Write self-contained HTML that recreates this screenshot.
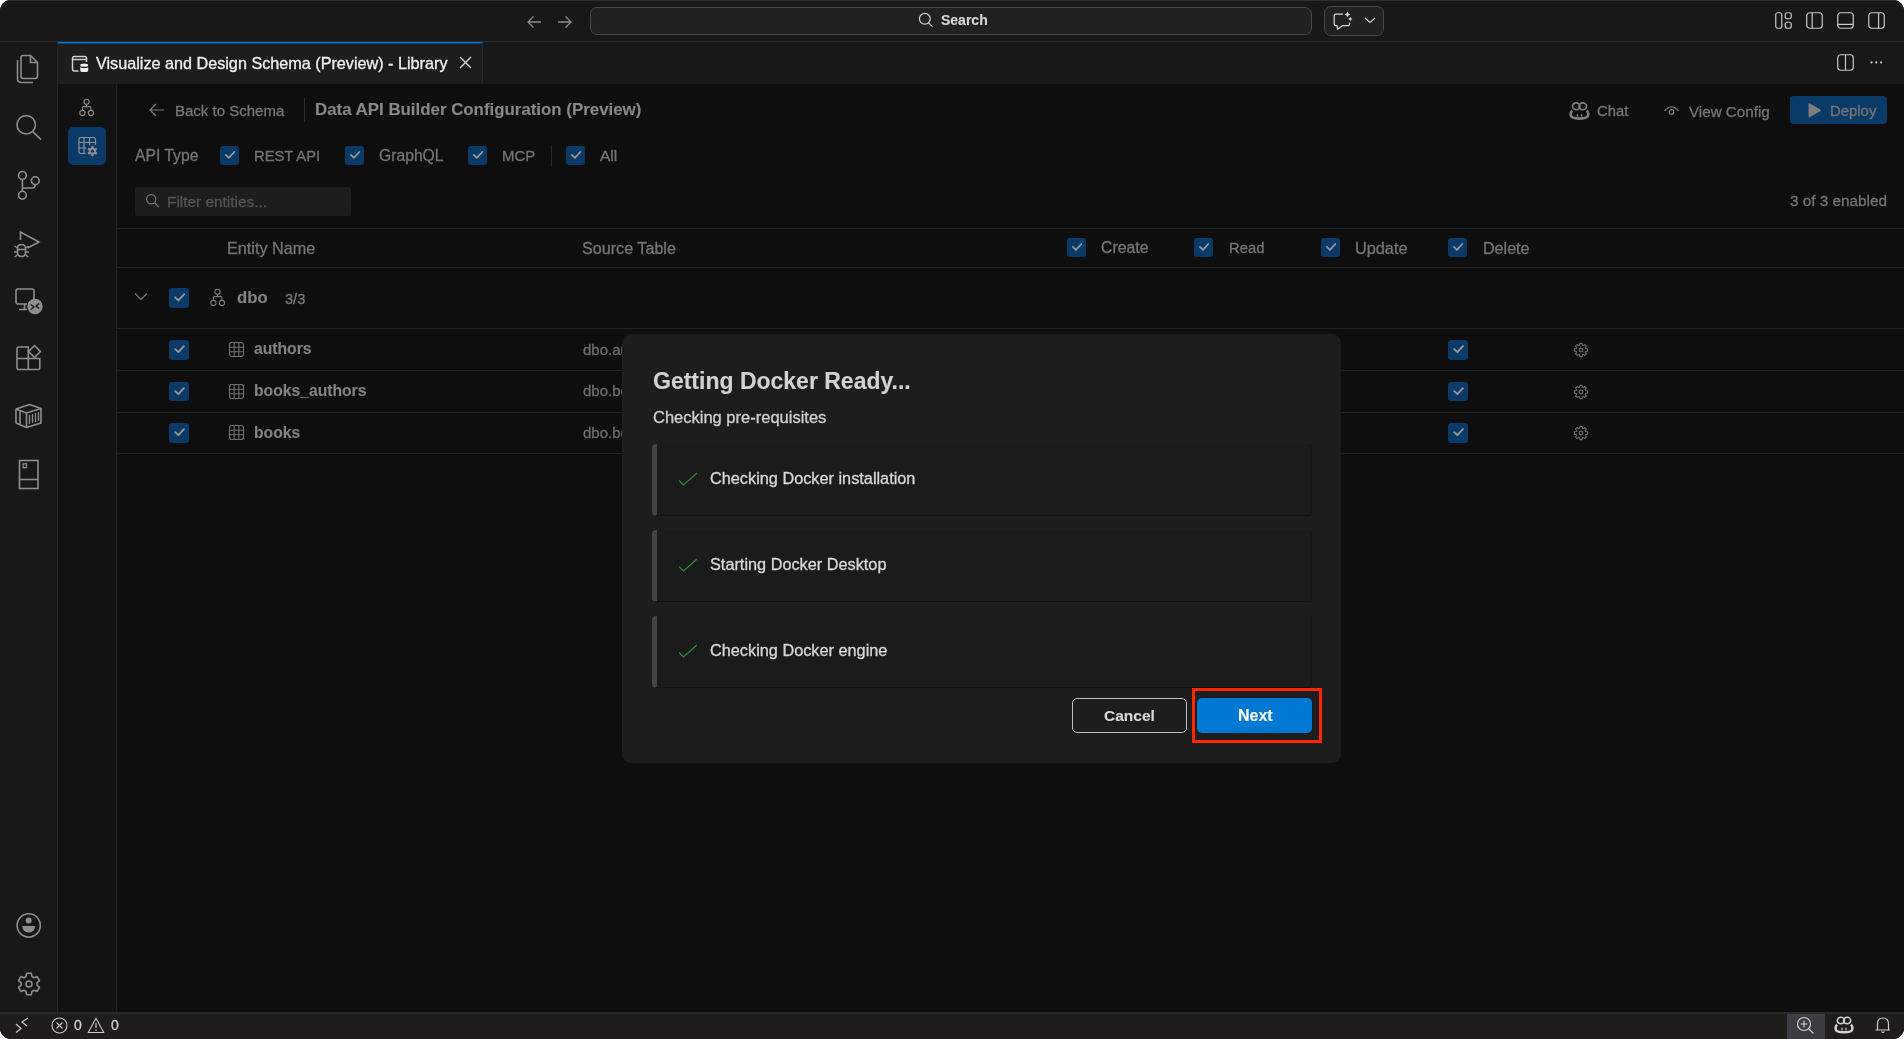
<!DOCTYPE html>
<html><head><meta charset="utf-8">
<style>
*{box-sizing:border-box;margin:0;padding:0}
html,body{width:1904px;height:1039px;overflow:hidden;background:#ffffff;font-family:"Liberation Sans",sans-serif}
.win{position:absolute;left:0;top:0;width:1904px;height:1039px;border-radius:11px;overflow:hidden;background:#181818}
.abs{position:absolute}
.titlebar{position:absolute;left:0;top:0;width:1904px;height:42px;background:#181818;border-top:1px solid #2e2e2e;border-bottom:1px solid #2b2b2b}
.activity{position:absolute;left:0;top:42px;width:58px;height:970px;background:#181818;border-right:1px solid #262626}
.tabbar{position:absolute;left:58px;top:42px;width:1846px;height:42px;background:#181818}
.tab{position:absolute;left:0;top:0;width:425px;height:42px;background:#1d1d1d;border-top:1px solid #0078d4;box-shadow:inset 0 1px 0 rgba(0,120,212,0.45);border-right:1px solid #262626}
.side2{position:absolute;left:58px;top:84px;width:59px;height:928px;background:#121212;border-right:1px solid #222}
.main{position:absolute;left:117px;top:84px;width:1787px;height:928px;background:#0e0e0e}
.status{position:absolute;left:0;top:1012px;width:1904px;height:27px;background:#1e1d1c;border-top:2px solid #2a2a2a}
.t{position:absolute;white-space:nowrap;line-height:1;will-change:transform;-webkit-text-stroke:0.3px currentColor}
.t.b{-webkit-text-stroke:0.12px currentColor}
svg{position:absolute;overflow:visible}
.step{position:absolute;left:652px;width:660px;height:72px;border-radius:4px;background:#1c1b1b;border-left:5px solid #444;border-bottom:1px solid #131313;border-right:1px solid #161616}
.cb{position:absolute;width:19px;height:19px;border-radius:3px;background:#0a3a68}

</style></head><body>
<div class="win">
  <div class="titlebar">
    <svg style="left:525px;top:12px" width="18" height="18" viewBox="0 0 18 18"><path d="M16 9H3M8.5 3.5L3 9l5.5 5.5" fill="none" stroke="#8a8a8a" stroke-width="1.3"/></svg>
    <svg style="left:556px;top:12px" width="18" height="18" viewBox="0 0 18 18"><path d="M2 9h13M9.5 3.5L15 9l-5.5 5.5" fill="none" stroke="#8a8a8a" stroke-width="1.3"/></svg>
    <div class="abs" style="left:590px;top:6px;width:722px;height:28px;border:1px solid #474747;border-radius:7px;background:#212121"></div>
    <svg style="left:918px;top:11px" width="16" height="16" viewBox="0 0 16 16"><circle cx="6.8" cy="6.8" r="5.4" fill="none" stroke="#cfcfcf" stroke-width="1.2"/><path d="M10.6 10.8L14.6 14.8" stroke="#cfcfcf" stroke-width="1.2"/></svg>
    <div class="t b" style="left:941px;top:12.3px;font-size:14px;font-weight:700;color:#d8d8d8">Search</div>
    <div class="abs" style="left:1324px;top:5px;width:60px;height:30px;border:1px solid #474747;border-radius:7px;background:#212121"></div>
    <svg style="left:1333px;top:10px" width="20" height="20" viewBox="0 0 20 20"><path d="M9.9 3.0H3.0Q1.2 3.0 1.2 5.0V12.6Q1.2 14.7 3.0 14.7H4.0L4.6 18.2L9.3 14.7H14.6Q16.6 14.7 16.6 12.5V11.6" fill="none" stroke="#d4d4d4" stroke-width="1.25" stroke-linejoin="round"/><path d="M14.4 0.6Q14.9 3 17.3 3.5Q14.9 4 14.4 6.4Q13.9 4 11.5 3.5Q13.9 3 14.4 0.6Z" fill="#d8d8d8"/><path d="M17.3 5.8Q17.7 7.6 19.5 8Q17.7 8.4 17.3 10.2Q16.9 8.4 15.1 8Q16.9 7.6 17.3 5.8Z" fill="#d8d8d8"/></svg>
    <svg style="left:1364px;top:14.5px" width="12" height="8" viewBox="0 0 12 8"><path d="M1 2l5 4.5L11 2" fill="none" stroke="#cfcfcf" stroke-width="1.2"/></svg>
    <svg style="left:1775px;top:11px" width="18" height="19" viewBox="0 0 18 19"><rect x="0.75" y="0.75" width="6" height="15.5" rx="2" fill="none" stroke="#c8c8c8" stroke-width="1.2"/><rect x="10.25" y="0.75" width="6" height="6" rx="2" fill="none" stroke="#c8c8c8" stroke-width="1.2"/><rect x="10.25" y="10.25" width="6" height="6" rx="2" fill="none" stroke="#c8c8c8" stroke-width="1.2"/></svg>
    <svg style="left:1806px;top:11px" width="18" height="19" viewBox="0 0 18 19"><rect x="0.75" y="0.75" width="15.5" height="15.5" rx="3" fill="none" stroke="#c8c8c8" stroke-width="1.2"/><path d="M6.2 1v15.5" stroke="#c8c8c8" stroke-width="1.2"/></svg>
    <svg style="left:1837px;top:11px" width="18" height="19" viewBox="0 0 18 19"><rect x="0.75" y="0.75" width="15.5" height="15.5" rx="3" fill="none" stroke="#c8c8c8" stroke-width="1.2"/><path d="M1 12.3h15" stroke="#c8c8c8" stroke-width="1.2"/></svg>
    <svg style="left:1868px;top:11px" width="18" height="19" viewBox="0 0 18 19"><rect x="0.75" y="0.75" width="15.5" height="15.5" rx="3" fill="none" stroke="#c8c8c8" stroke-width="1.2"/><path d="M10.6 1v15.5" stroke="#c8c8c8" stroke-width="1.2"/></svg>
  </div>
  <div class="activity"></div>
  <!-- activity icons (absolute to window) -->
  <svg style="left:15px;top:54px" width="26" height="31" viewBox="0 0 26 31"><path d="M6 3.5Q6 1.5 8 1.5H15.5L22.5 8.5V22Q22.5 24.5 20 24.5H8.5Q6 24.5 6 22Z" fill="none" stroke="#8e8e8e" stroke-width="1.6"/><path d="M15.5 1.5V8.5H22.5" fill="none" stroke="#8e8e8e" stroke-width="1.6"/><path d="M2.5 6V24.5Q2.5 28.5 6.5 28.5H18" fill="none" stroke="#8e8e8e" stroke-width="1.6"/></svg>
  <svg style="left:15px;top:114px" width="28" height="28" viewBox="0 0 28 28"><circle cx="11.2" cy="10.8" r="9.2" fill="none" stroke="#8e8e8e" stroke-width="1.6"/><path d="M17.8 17.6L26 25.6" stroke="#8e8e8e" stroke-width="1.6"/></svg>
  <svg style="left:15px;top:168px" width="28" height="34" viewBox="0 0 28 34"><circle cx="7.4" cy="7.4" r="3.9" fill="none" stroke="#8e8e8e" stroke-width="1.6"/><circle cx="20.3" cy="12.7" r="3.9" fill="none" stroke="#8e8e8e" stroke-width="1.6"/><circle cx="7.4" cy="27.2" r="3.9" fill="none" stroke="#8e8e8e" stroke-width="1.6"/><path d="M7.4 11.3V23.3M20.3 16.6Q20.3 20 17 20H7.4" fill="none" stroke="#8e8e8e" stroke-width="1.6"/></svg>
  <svg style="left:12px;top:229px" width="32" height="30" viewBox="0 0 32 30"><path d="M8.5 11V3L27 13L15.5 19" fill="none" stroke="#8e8e8e" stroke-width="1.6"/><path d="M5.5 19.5Q5.5 15.5 9.5 15.5Q13.5 15.5 13.5 19.5V23.5Q13.5 27.5 9.5 27.5Q5.5 27.5 5.5 23.5Z" fill="none" stroke="#8e8e8e" stroke-width="1.6"/><path d="M2.5 17L5.5 19M16.5 17L13.5 19M2 23H5.5M17 23H13.5M2.5 28L5.5 26M16.5 28L13.5 26M5.5 20.5H13.5" fill="none" stroke="#8e8e8e" stroke-width="1.4"/></svg>
  <svg style="left:14px;top:286px" width="30" height="30" viewBox="0 0 30 30"><path d="M20 16V5Q20 3 18 3H4Q2 3 2 5V16Q2 18 4 18H13" fill="none" stroke="#8e8e8e" stroke-width="1.6"/><path d="M10.5 18V23M5 23.5H13" fill="none" stroke="#8e8e8e" stroke-width="1.6"/><circle cx="21" cy="20.5" r="7.7" fill="#8e8e8e"/><path d="M16.8 18.5L20 21L16.8 23.5M25.2 17.5L22 20L25.2 22.5" fill="none" stroke="#1a1a1a" stroke-width="1.3"/></svg>
  <svg style="left:15px;top:344px" width="30" height="30" viewBox="0 0 30 30"><path d="M2 14.5H13.3V25.5H3.5Q2 25.5 2 24V14.5ZM2 14.5V4.5Q2 3 3.5 3H13.3V25.5M13.3 14.5H24.8V24Q24.8 25.5 23.3 25.5H13.3" fill="none" stroke="#8e8e8e" stroke-width="1.6"/><path d="M19.5 1.5L25.5 7.5L19.5 13.5L13.5 7.5Z" fill="none" stroke="#8e8e8e" stroke-width="1.6" stroke-linejoin="round"/></svg>
  <svg style="left:14px;top:403px" width="30" height="28" viewBox="0 0 30 28"><path d="M2 6L15.5 1.5L27 5.5V20L12.5 24.5L2 20Z" fill="none" stroke="#8e8e8e" stroke-width="1.6" stroke-linejoin="round"/><path d="M2 6L12.5 10L27 5.5M12.5 10V24.5M6 7.5V21.5" fill="none" stroke="#8e8e8e" stroke-width="1.6"/><path d="M15.5 12V21M18.5 11V20M21.5 10V19M24.5 9V18" fill="none" stroke="#8e8e8e" stroke-width="1.3"/></svg>
  <svg style="left:18px;top:459px" width="22" height="31" viewBox="0 0 22 31"><rect x="1.5" y="1.5" width="18.5" height="28" fill="none" stroke="#8e8e8e" stroke-width="1.6"/><path d="M1.5 20.5H20" stroke="#8e8e8e" stroke-width="1.6"/><rect x="5.2" y="4.8" width="3.3" height="3.8" fill="none" stroke="#8e8e8e" stroke-width="1.3"/></svg>
  <svg style="left:15px;top:912px" width="28" height="28" viewBox="0 0 28 28"><circle cx="13.7" cy="13.4" r="11.6" fill="none" stroke="#8e8e8e" stroke-width="1.6"/><circle cx="13.7" cy="8.6" r="3" fill="#8e8e8e"/><path d="M7.4 14H20Q20 20.4 13.7 20.4Q7.4 20.4 7.4 14Z" fill="#8e8e8e"/></svg>
  <svg style="left:15px;top:970px" width="28" height="28" viewBox="-14 -14 28 28"><path d="M-2.97 -7.43 L-2.40 -10.73 L2.40 -10.73 L2.97 -7.43 L4.95 -6.28 L8.10 -7.45 L10.50 -3.29 L7.92 -1.14 L7.92 1.14 L10.50 3.29 L8.10 7.45 L4.95 6.28 L2.97 7.43 L2.40 10.73 L-2.40 10.73 L-2.97 7.43 L-4.95 6.28 L-8.10 7.45 L-10.50 3.29 L-7.92 1.14 L-7.92 -1.14 L-10.50 -3.29 L-8.10 -7.45 L-4.95 -6.28Z" stroke-linejoin="round" fill="none" stroke="#8e8e8e" stroke-width="1.6"/><circle cx="0" cy="0" r="3" fill="none" stroke="#8e8e8e" stroke-width="1.6"/></svg>
  <div class="tabbar"><div class="tab"></div></div>
  <svg style="left:71px;top:55px" width="19" height="19" viewBox="0 0 19 19"><path d="M7.5 16H3.5Q1.5 16 1.5 14V3.5Q1.5 1.5 3.5 1.5H13.5Q15.5 1.5 15.5 3.5V7" fill="none" stroke="#d0d0d0" stroke-width="1.5"/><path d="M1.5 4.5H15.5" stroke="#d0d0d0" stroke-width="1.5"/><ellipse cx="13.2" cy="10.2" rx="4" ry="1.6" fill="#f0f0f0"/><path d="M9.2 11.5V15.5Q9.2 17 13.2 17Q17.2 17 17.2 15.5V11.5Q17.2 13 13.2 13Q9.2 13 9.2 11.5Z" fill="#f0f0f0"/></svg>
  <div class="t" style="left:96px;top:55.3px;font-size:16.2px;color:#f0f0f0">Visualize and Design Schema (Preview) - Library</div>
  <svg style="left:459px;top:56px" width="13" height="13" viewBox="0 0 13 13"><path d="M1 1L12 12M12 1L1 12" stroke="#d8d8d8" stroke-width="1.4"/></svg>
  <svg style="left:1836px;top:53px" width="19" height="19" viewBox="0 0 19 19"><rect x="1.75" y="1.75" width="15.5" height="15.5" rx="3" fill="none" stroke="#c8c8c8" stroke-width="1.2"/><path d="M9.5 2v15" stroke="#c8c8c8" stroke-width="1.2"/></svg>
  <svg style="left:1869px;top:60px" width="16" height="5" viewBox="0 0 16 5"><circle cx="2.5" cy="2.4" r="1.1" fill="#c8c8c8"/><circle cx="7.3" cy="2.4" r="1.1" fill="#c8c8c8"/><circle cx="12.1" cy="2.4" r="1.1" fill="#c8c8c8"/></svg>
  <div class="side2"></div>
  <svg style="left:78px;top:98px" width="17" height="19" viewBox="0 0 17 19"><circle cx="8.5" cy="3.8" r="2.6" fill="none" stroke="#888" stroke-width="1.1"/><circle cx="4.4" cy="15" r="2.6" fill="none" stroke="#888" stroke-width="1.1"/><circle cx="12.9" cy="15" r="2.6" fill="none" stroke="#888" stroke-width="1.1"/><path d="M8.5 6.4V8.6M4.4 12.4V9.6Q4.4 8.6 5.4 8.6H11.9Q12.9 8.6 12.9 9.6V12.4" fill="none" stroke="#888" stroke-width="1.1"/></svg>
  <div class="abs" style="left:68px;top:127px;width:38px;height:38px;border-radius:5px;background:#0a3a68"></div>
  <svg style="left:77px;top:136px" width="22" height="22" viewBox="0 0 22 22"><path d="M8.5 17.5H4Q2 17.5 2 15.5V3.5Q2 1.5 4 1.5H16.5Q18.5 1.5 18.5 3.5V9M2 6.5H18.5M2 12H9M7 1.5V17.5M12.5 1.5V9" fill="none" stroke="#8f8f8f" stroke-width="1.2"/><g transform="translate(15.4 15.2)"><path d="M-1.27 -3.37 L-1.03 -5.10 L1.03 -5.10 L1.27 -3.37 L2.28 -2.78 L3.90 -3.44 L4.93 -1.65 L3.55 -0.59 L3.55 0.59 L4.93 1.65 L3.90 3.44 L2.28 2.78 L1.27 3.37 L1.03 5.10 L-1.03 5.10 L-1.27 3.37 L-2.28 2.78 L-3.90 3.44 L-4.93 1.65 L-3.55 0.59 L-3.55 -0.59 L-4.93 -1.65 L-3.90 -3.44 L-2.28 -2.78Z" fill="#8f8f8f"/><circle r="1.6" fill="#0a3a68"/></g></svg>
  <div class="main"></div>
  <!-- header -->
  <svg style="left:148px;top:102px" width="18" height="16" viewBox="0 0 18 16"><path d="M16 8H2M8 2L2 8l6 6" fill="none" stroke="#7c7c7c" stroke-width="1.2"/></svg>
  <div class="t" style="left:174.5px;top:103px;font-size:15px;color:#757575">Back to Schema</div>
  <div class="abs" style="left:304px;top:98px;width:1px;height:24px;background:#2a2a2a"></div>
  <div class="t b" style="left:314.5px;top:102.4px;font-size:16.87px;font-weight:700;color:#878787">Data API Builder Configuration (Preview)</div>
  <svg style="left:1569px;top:102px" width="21" height="18" viewBox="0 0 21 18"><ellipse cx="7.2" cy="4.3" rx="3.7" ry="3.4" fill="none" stroke="#7e7e7e" stroke-width="1.7"/><ellipse cx="13.8" cy="4.3" rx="3.7" ry="3.4" fill="none" stroke="#7e7e7e" stroke-width="1.7"/><path d="M3.2 8.6Q1.6 10.2 1.6 12.6Q1.6 16.6 10.5 16.6Q19.4 16.6 19.4 12.6Q19.4 10.2 17.8 8.6" fill="none" stroke="#7e7e7e" stroke-width="2.6"/><path d="M8.4 12V14.8M12.6 12V14.8" stroke="#7e7e7e" stroke-width="1.3"/></svg>
  <div class="t" style="left:1597px;top:103.8px;font-size:14.8px;color:#757575">Chat</div>
  <svg style="left:1663px;top:104px" width="17" height="13" viewBox="0 0 17 13"><path d="M1.5 7Q8.5 -1.5 15.5 7" fill="none" stroke="#7e7e7e" stroke-width="1.2"/><circle cx="8.5" cy="8" r="2.3" fill="none" stroke="#7e7e7e" stroke-width="1.2"/></svg>
  <div class="t" style="left:1688.5px;top:103.5px;font-size:15.2px;color:#757575">View Config</div>
  <div class="abs" style="left:1790px;top:96px;width:97px;height:28px;border-radius:4px;background:#0a3a68"></div>
  <svg style="left:1806px;top:102px" width="16" height="17" viewBox="0 0 16 17"><path d="M2.5 2.5Q2.5 0.8 4 1.6L14.2 7.4Q15.5 8.3 14.2 9.2L4 15Q2.5 15.8 2.5 14.1Z" fill="#7e7e7e"/></svg>
  <div class="t" style="left:1829.5px;top:103.8px;font-size:14.9px;color:#757575">Deploy</div>
  <!-- api type row -->
  <div class="t" style="left:134.8px;top:147.9px;font-size:15.7px;color:#757575">API Type</div>
  <div class="cb" style="left:220px;top:146px"><svg style="left:0;top:0" width="100%" height="100%" viewBox="0 0 19 19"><path d="M5.9 8.9L8.9 11.8L14.3 6" fill="none" stroke="#979797" stroke-width="1.8" stroke-linecap="round" stroke-linejoin="round"/></svg></div>
  <div class="t" style="left:254.2px;top:148.5px;font-size:14.75px;color:#757575">REST API</div>
  <div class="cb" style="left:345px;top:146px"><svg style="left:0;top:0" width="100%" height="100%" viewBox="0 0 19 19"><path d="M5.9 8.9L8.9 11.8L14.3 6" fill="none" stroke="#979797" stroke-width="1.8" stroke-linecap="round" stroke-linejoin="round"/></svg></div>
  <div class="t" style="left:379.4px;top:147.9px;font-size:15.7px;color:#757575">GraphQL</div>
  <div class="cb" style="left:468px;top:146px"><svg style="left:0;top:0" width="100%" height="100%" viewBox="0 0 19 19"><path d="M5.9 8.9L8.9 11.8L14.3 6" fill="none" stroke="#979797" stroke-width="1.8" stroke-linecap="round" stroke-linejoin="round"/></svg></div>
  <div class="t" style="left:502.3px;top:148.3px;font-size:15px;color:#757575">MCP</div>
  <div class="abs" style="left:551px;top:145px;width:1px;height:22px;background:#262626"></div>
  <div class="cb" style="left:566px;top:146px"><svg style="left:0;top:0" width="100%" height="100%" viewBox="0 0 19 19"><path d="M5.9 8.9L8.9 11.8L14.3 6" fill="none" stroke="#979797" stroke-width="1.8" stroke-linecap="round" stroke-linejoin="round"/></svg></div>
  <div class="t" style="left:600px;top:148px;font-size:15.5px;color:#757575">All</div>
  <!-- filter -->
  <div class="abs" style="left:135px;top:187px;width:216px;height:29px;border-radius:2px;background:#1d1d1d"></div>
  <svg style="left:145px;top:193px" width="16" height="16" viewBox="0 0 16 16"><circle cx="6.2" cy="6.2" r="4.6" fill="none" stroke="#777" stroke-width="1.2"/><path d="M9.6 9.6L14 14" stroke="#777" stroke-width="1.2"/></svg>
  <div class="t" style="left:167.3px;top:194px;font-size:15.4px;color:#555">Filter entities...</div>
  <div class="t" style="left:1789.5px;top:193.3px;font-size:15.3px;color:#757575">3 of 3 enabled</div>
  <!-- table header -->
  <div class="abs" style="left:117px;top:228px;width:1787px;height:1px;background:#222"></div>
  <div class="abs" style="left:117px;top:267px;width:1787px;height:1px;background:#222"></div>
  <div class="t" style="left:227px;top:240.3px;font-size:16.2px;color:#757575">Entity Name</div>
  <div class="t" style="left:582.4px;top:240.3px;font-size:16.15px;color:#757575">Source Table</div>
  <div class="cb" style="left:1067px;top:238px"><svg style="left:0;top:0" width="100%" height="100%" viewBox="0 0 19 19"><path d="M5.9 8.9L8.9 11.8L14.3 6" fill="none" stroke="#979797" stroke-width="1.8" stroke-linecap="round" stroke-linejoin="round"/></svg></div>
  <div class="t" style="left:1101px;top:240px;font-size:15.8px;color:#757575">Create</div>
  <div class="cb" style="left:1194px;top:238px"><svg style="left:0;top:0" width="100%" height="100%" viewBox="0 0 19 19"><path d="M5.9 8.9L8.9 11.8L14.3 6" fill="none" stroke="#979797" stroke-width="1.8" stroke-linecap="round" stroke-linejoin="round"/></svg></div>
  <div class="t" style="left:1228.6px;top:240.5px;font-size:14.8px;color:#757575">Read</div>
  <div class="cb" style="left:1321px;top:238px"><svg style="left:0;top:0" width="100%" height="100%" viewBox="0 0 19 19"><path d="M5.9 8.9L8.9 11.8L14.3 6" fill="none" stroke="#979797" stroke-width="1.8" stroke-linecap="round" stroke-linejoin="round"/></svg></div>
  <div class="t" style="left:1355.4px;top:239.5px;font-size:16.3px;color:#757575">Update</div>
  <div class="cb" style="left:1448px;top:238px"><svg style="left:0;top:0" width="100%" height="100%" viewBox="0 0 19 19"><path d="M5.9 8.9L8.9 11.8L14.3 6" fill="none" stroke="#979797" stroke-width="1.8" stroke-linecap="round" stroke-linejoin="round"/></svg></div>
  <div class="t" style="left:1482.5px;top:239.7px;font-size:16.1px;color:#757575">Delete</div>
  <!-- dbo row -->
  <svg style="left:134px;top:292px" width="14" height="10" viewBox="0 0 14 10"><path d="M1 1.5L7 7.5L13 1.5" fill="none" stroke="#7a7a7a" stroke-width="1.2"/></svg>
  <div class="cb" style="left:169px;top:288px;width:20px;height:20px"><svg style="left:0;top:0" width="100%" height="100%" viewBox="0 0 19 19"><path d="M5.9 8.9L8.9 11.8L14.3 6" fill="none" stroke="#979797" stroke-width="1.8" stroke-linecap="round" stroke-linejoin="round"/></svg></div>
  <svg style="left:209px;top:288px" width="17" height="19" viewBox="0 0 17 19"><circle cx="8.5" cy="3.8" r="2.6" fill="none" stroke="#7a7a7a" stroke-width="1.1"/><circle cx="4.4" cy="15" r="2.6" fill="none" stroke="#7a7a7a" stroke-width="1.1"/><circle cx="12.9" cy="15" r="2.6" fill="none" stroke="#7a7a7a" stroke-width="1.1"/><path d="M8.5 6.4V8.6M4.4 12.4V9.6Q4.4 8.6 5.4 8.6H11.9Q12.9 8.6 12.9 9.6V12.4" fill="none" stroke="#7a7a7a" stroke-width="1.1"/></svg>
  <div class="t b" style="left:236.7px;top:290.4px;font-size:16.7px;font-weight:700;color:#828282">dbo</div>
  <div class="t" style="left:284.6px;top:291.5px;font-size:14.6px;color:#7a7a7a">3/3</div>
  <div class="abs" style="left:117px;top:328px;width:1787px;height:1px;background:#222"></div>
  <div class="cb" style="left:169px;top:340px;width:20px;height:19.5px"><svg style="left:0;top:0" width="100%" height="100%" viewBox="0 0 19 19"><path d="M5.9 8.9L8.9 11.8L14.3 6" fill="none" stroke="#979797" stroke-width="1.8" stroke-linecap="round" stroke-linejoin="round"/></svg></div>
  <svg style="left:228px;top:341px" width="17" height="17" viewBox="0 0 17 17"><rect x="1.5" y="1.5" width="14" height="14" rx="2.5" fill="none" stroke="#707070" stroke-width="1.1"/><path d="M1.5 6.2H15.5M1.5 10.8H15.5M6.2 1.5V15.5M10.8 1.5V15.5" stroke="#707070" stroke-width="1.1"/></svg>
  <div class="t b" style="left:253.5px;top:341.2px;font-size:15.7px;font-weight:700;color:#828282">authors</div>
  <div class="t" style="left:583px;top:341.5px;font-size:15px;color:#6e6e6e">dbo.authors</div>
  <div class="cb" style="left:1448px;top:340px;width:20px;height:19.5px"><svg style="left:0;top:0" width="100%" height="100%" viewBox="0 0 19 19"><path d="M5.9 8.9L8.9 11.8L14.3 6" fill="none" stroke="#979797" stroke-width="1.8" stroke-linecap="round" stroke-linejoin="round"/></svg></div>
  <svg style="left:1573px;top:342px" width="16" height="16" viewBox="-8 -8 16 16"><path d="M-1.45 -4.68 L-1.13 -6.60 L1.13 -6.60 L1.45 -4.68 L2.29 -4.33 L3.87 -5.47 L5.47 -3.87 L4.33 -2.29 L4.68 -1.45 L6.60 -1.13 L6.60 1.13 L4.68 1.45 L4.33 2.29 L5.47 3.87 L3.87 5.47 L2.29 4.33 L1.45 4.68 L1.13 6.60 L-1.13 6.60 L-1.45 4.68 L-2.29 4.33 L-3.87 5.47 L-5.47 3.87 L-4.33 2.29 L-4.68 1.45 L-6.60 1.13 L-6.60 -1.13 L-4.68 -1.45 L-4.33 -2.29 L-5.47 -3.87 L-3.87 -5.47 L-2.29 -4.33Z" fill="none" stroke="#6e6e6e" stroke-width="1.1" stroke-linejoin="round"/><circle r="1.9" fill="none" stroke="#6e6e6e" stroke-width="1.1"/></svg>
  <div class="abs" style="left:117px;top:370px;width:1787px;height:1px;background:#222"></div>
  <div class="cb" style="left:169px;top:381.5px;width:20px;height:19.5px"><svg style="left:0;top:0" width="100%" height="100%" viewBox="0 0 19 19"><path d="M5.9 8.9L8.9 11.8L14.3 6" fill="none" stroke="#979797" stroke-width="1.8" stroke-linecap="round" stroke-linejoin="round"/></svg></div>
  <svg style="left:228px;top:382.5px" width="17" height="17" viewBox="0 0 17 17"><rect x="1.5" y="1.5" width="14" height="14" rx="2.5" fill="none" stroke="#707070" stroke-width="1.1"/><path d="M1.5 6.2H15.5M1.5 10.8H15.5M6.2 1.5V15.5M10.8 1.5V15.5" stroke="#707070" stroke-width="1.1"/></svg>
  <div class="t b" style="left:253.5px;top:382.7px;font-size:15.7px;font-weight:700;color:#828282">books_authors</div>
  <div class="t" style="left:583px;top:383px;font-size:15px;color:#6e6e6e">dbo.books</div>
  <div class="cb" style="left:1448px;top:381.5px;width:20px;height:19.5px"><svg style="left:0;top:0" width="100%" height="100%" viewBox="0 0 19 19"><path d="M5.9 8.9L8.9 11.8L14.3 6" fill="none" stroke="#979797" stroke-width="1.8" stroke-linecap="round" stroke-linejoin="round"/></svg></div>
  <svg style="left:1573px;top:383.5px" width="16" height="16" viewBox="-8 -8 16 16"><path d="M-1.45 -4.68 L-1.13 -6.60 L1.13 -6.60 L1.45 -4.68 L2.29 -4.33 L3.87 -5.47 L5.47 -3.87 L4.33 -2.29 L4.68 -1.45 L6.60 -1.13 L6.60 1.13 L4.68 1.45 L4.33 2.29 L5.47 3.87 L3.87 5.47 L2.29 4.33 L1.45 4.68 L1.13 6.60 L-1.13 6.60 L-1.45 4.68 L-2.29 4.33 L-3.87 5.47 L-5.47 3.87 L-4.33 2.29 L-4.68 1.45 L-6.60 1.13 L-6.60 -1.13 L-4.68 -1.45 L-4.33 -2.29 L-5.47 -3.87 L-3.87 -5.47 L-2.29 -4.33Z" fill="none" stroke="#6e6e6e" stroke-width="1.1" stroke-linejoin="round"/><circle r="1.9" fill="none" stroke="#6e6e6e" stroke-width="1.1"/></svg>
  <div class="abs" style="left:117px;top:411.5px;width:1787px;height:1px;background:#222"></div>
  <div class="cb" style="left:169px;top:423px;width:20px;height:19.5px"><svg style="left:0;top:0" width="100%" height="100%" viewBox="0 0 19 19"><path d="M5.9 8.9L8.9 11.8L14.3 6" fill="none" stroke="#979797" stroke-width="1.8" stroke-linecap="round" stroke-linejoin="round"/></svg></div>
  <svg style="left:228px;top:424px" width="17" height="17" viewBox="0 0 17 17"><rect x="1.5" y="1.5" width="14" height="14" rx="2.5" fill="none" stroke="#707070" stroke-width="1.1"/><path d="M1.5 6.2H15.5M1.5 10.8H15.5M6.2 1.5V15.5M10.8 1.5V15.5" stroke="#707070" stroke-width="1.1"/></svg>
  <div class="t b" style="left:253.5px;top:425px;font-size:15.7px;font-weight:700;color:#828282">books</div>
  <div class="t" style="left:583px;top:425.3px;font-size:15px;color:#6e6e6e">dbo.books</div>
  <div class="cb" style="left:1448px;top:423px;width:20px;height:19.5px"><svg style="left:0;top:0" width="100%" height="100%" viewBox="0 0 19 19"><path d="M5.9 8.9L8.9 11.8L14.3 6" fill="none" stroke="#979797" stroke-width="1.8" stroke-linecap="round" stroke-linejoin="round"/></svg></div>
  <svg style="left:1573px;top:425px" width="16" height="16" viewBox="-8 -8 16 16"><path d="M-1.45 -4.68 L-1.13 -6.60 L1.13 -6.60 L1.45 -4.68 L2.29 -4.33 L3.87 -5.47 L5.47 -3.87 L4.33 -2.29 L4.68 -1.45 L6.60 -1.13 L6.60 1.13 L4.68 1.45 L4.33 2.29 L5.47 3.87 L3.87 5.47 L2.29 4.33 L1.45 4.68 L1.13 6.60 L-1.13 6.60 L-1.45 4.68 L-2.29 4.33 L-3.87 5.47 L-5.47 3.87 L-4.33 2.29 L-4.68 1.45 L-6.60 1.13 L-6.60 -1.13 L-4.68 -1.45 L-4.33 -2.29 L-5.47 -3.87 L-3.87 -5.47 L-2.29 -4.33Z" fill="none" stroke="#6e6e6e" stroke-width="1.1" stroke-linejoin="round"/><circle r="1.9" fill="none" stroke="#6e6e6e" stroke-width="1.1"/></svg>
  <div class="abs" style="left:117px;top:453px;width:1787px;height:1px;background:#222"></div>

  <!-- dialog -->
  <div class="abs" style="left:622px;top:334px;width:719px;height:429px;border-radius:9px;background:#1e1d1d"></div>
  <div class="t b" style="left:652.5px;top:369.5px;font-size:23px;font-weight:700;color:#d2d2d2">Getting Docker Ready...</div>
  <div class="t" style="left:652.5px;top:409px;font-size:16.5px;color:#d0d0d0">Checking pre-requisites</div>
  <div class="step" style="top:444px"></div>
  <svg style="left:678px;top:472px" width="20" height="15" viewBox="0 0 20 15"><path d="M1 8.5L5.5 13L19 1" fill="none" stroke="#26903c" stroke-width="1.2"/></svg>
  <div class="t" style="left:709.8px;top:470px;font-size:16.3px;color:#d8d8d8">Checking Docker installation</div>
  <div class="step" style="top:530px"></div>
  <svg style="left:678px;top:558px" width="20" height="15" viewBox="0 0 20 15"><path d="M1 8.5L5.5 13L19 1" fill="none" stroke="#26903c" stroke-width="1.2"/></svg>
  <div class="t" style="left:709.8px;top:556px;font-size:16.3px;color:#d8d8d8">Starting Docker Desktop</div>
  <div class="step" style="top:616px"></div>
  <svg style="left:678px;top:644px" width="20" height="15" viewBox="0 0 20 15"><path d="M1 8.5L5.5 13L19 1" fill="none" stroke="#26903c" stroke-width="1.2"/></svg>
  <div class="t" style="left:709.8px;top:642px;font-size:16.3px;color:#d8d8d8">Checking Docker engine</div>
  
  <div class="abs" style="left:1072px;top:698px;width:115px;height:35px;border:1px solid #bdbdbd;border-radius:5px"></div>
  <div class="t b" style="left:1104.2px;top:707.5px;font-size:15.5px;font-weight:700;color:#d8d8d8">Cancel</div>
  <div class="abs" style="left:1197px;top:698px;width:115px;height:35px;border-radius:5px;background:#0078d4"></div>
  <div class="t b" style="left:1237.5px;top:707.5px;font-size:16px;font-weight:700;color:#ffffff">Next</div>
  <div class="abs" style="left:1192px;top:687.5px;width:130px;height:55.5px;border:3.8px solid #ff2600"></div>
  <div class="status"></div>
  <svg style="left:15px;top:1017px" width="14" height="16" viewBox="0 0 14 16"><path d="M1 7L6 11.5L1 15.5M13 1L7 5L12 9" fill="none" stroke="#c8c8c8" stroke-width="1.2"/></svg>
  <svg style="left:51px;top:1016.5px" width="17" height="17" viewBox="0 0 17 17"><circle cx="8.5" cy="8.5" r="7.5" fill="none" stroke="#c8c8c8" stroke-width="1.1"/><path d="M5.5 5.5L11.5 11.5M11.5 5.5L5.5 11.5" stroke="#c8c8c8" stroke-width="1.1"/></svg>
  <div class="t" style="left:74px;top:1018px;font-size:14px;color:#d0d0d0">0</div>
  <svg style="left:87px;top:1016.5px" width="18" height="17" viewBox="0 0 18 17"><path d="M9 1.2L16.8 15.5H1.2Z" fill="none" stroke="#c8c8c8" stroke-width="1.1" stroke-linejoin="round"/><path d="M9 6V11M9 12.5V14" stroke="#c8c8c8" stroke-width="1.2"/></svg>
  <div class="t" style="left:110.5px;top:1018px;font-size:14px;color:#d0d0d0">0</div>
  <div class="abs" style="left:1787px;top:1014px;width:38px;height:25px;background:#3b3d42"></div>
  <svg style="left:1796px;top:1016px" width="20" height="20" viewBox="0 0 20 20"><circle cx="8" cy="8" r="6.5" fill="none" stroke="#d0d0d0" stroke-width="1.2"/><path d="M8 4.5V11.5M4.5 8H11.5M12.8 12.8L17.5 17.5" stroke="#d0d0d0" stroke-width="1.2"/></svg>
  <svg style="left:1834px;top:1016px" width="20" height="18" viewBox="0 0 21 18"><ellipse cx="7.2" cy="4.3" rx="3.7" ry="3.4" fill="none" stroke="#d0d0d0" stroke-width="1.7"/><ellipse cx="13.8" cy="4.3" rx="3.7" ry="3.4" fill="none" stroke="#d0d0d0" stroke-width="1.7"/><path d="M3.2 8.6Q1.6 10.2 1.6 12.6Q1.6 16.6 10.5 16.6Q19.4 16.6 19.4 12.6Q19.4 10.2 17.8 8.6" fill="none" stroke="#d0d0d0" stroke-width="2.6"/><path d="M8.4 12V14.8M12.6 12V14.8" stroke="#d0d0d0" stroke-width="1.3"/></svg>
  <svg style="left:1875px;top:1016px" width="16" height="19" viewBox="0 0 16 19"><path d="M2.5 14V8Q2.5 2 8 2Q13.5 2 13.5 8V14H1H15" fill="none" stroke="#d0d0d0" stroke-width="1.2" stroke-linejoin="round"/><path d="M6.5 15.5Q8 17.5 9.5 15.5" fill="none" stroke="#d0d0d0" stroke-width="1.2"/></svg>
</div>
</body></html>
